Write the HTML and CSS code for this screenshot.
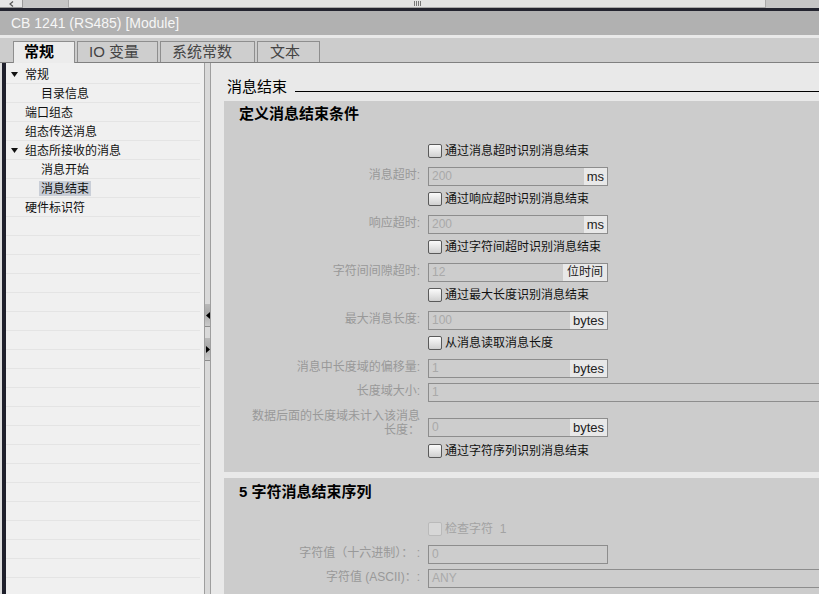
FILE: index.html
```html
<!DOCTYPE html>
<html lang="zh-CN">
<head>
    <meta charset="utf-8" />
    <title>CB 1241 (RS485) [Module]</title>
    <link rel="stylesheet" href="styles.css">
</head>
<body>
<div class="topstrip">
    <div class="sb-btn">
        <svg width="5" height="6" viewBox="0 0 5 6"><path d="M4 0.5 L1 3 L4 5.5" fill="none" stroke="#555" stroke-width="1.2"/></svg>
    </div>
    <div class="sb-track">
        <div class="sb-thumb"><span class="grip"></span></div>
    </div>
</div>
<div class="darkline"></div>
<div class="titlebar">CB 1241 (RS485) [Module]</div>
<div class="titlesep"></div>
<div class="tabbar">
    <div class="tab tab-general active">常规</div>
    <div class="tab tab-io">IO 变量</div>
    <div class="tab tab-const">系统常数</div>
    <div class="tab tab-text">文本</div>
</div>
<div class="main">
    <div class="edge"></div>
    <div class="tree">
        <div class="tree-list">
            <div class="node"><span class="caret"><svg width="7" height="5" viewBox="0 0 7 5"><polygon points="0,0 7,0 3.5,5" fill="#111"/></svg></span>常规</div>
            <div class="node sub">目录信息</div>
            <div class="node">端口组态</div>
            <div class="node">组态传送消息</div>
            <div class="node"><span class="caret"><svg width="7" height="5" viewBox="0 0 7 5"><polygon points="0,0 7,0 3.5,5" fill="#111"/></svg></span>组态所接收的消息</div>
            <div class="node sub">消息开始</div>
            <div class="node sub"><span class="sel">消息结束</span></div>
            <div class="node">硬件标识符</div>
        </div>
    </div>
    <div class="splitter">
        <div class="split-btn">
            <svg width="4" height="7" viewBox="0 0 4 7"><polygon points="4,0 4,7 0,3.5" fill="#000"/></svg>
        </div>
        <div class="split-btn">
            <svg width="4" height="7" viewBox="0 0 4 7"><polygon points="0,0 0,7 4,3.5" fill="#000"/></svg>
        </div>
    </div>
    <div class="editor">
        <div class="ed-head">
            <span class="ed-title">消息结束</span>
            <span class="rule"></span>
        </div>

        <div class="section">
            <h2>定义消息结束条件</h2>
            <div class="row">
                <span class="label"></span>
                <span class="check"><span class="box"></span>通过消息超时识别消息结束</span>
            </div>
            <div class="row">
                <span class="label">消息超时:</span>
                <div class="input"><span class="val">200</span><span class="unit">ms</span></div>
            </div>
            <div class="row">
                <span class="label"></span>
                <span class="check"><span class="box"></span>通过响应超时识别消息结束</span>
            </div>
            <div class="row">
                <span class="label">响应超时:</span>
                <div class="input"><span class="val">200</span><span class="unit">ms</span></div>
            </div>
            <div class="row">
                <span class="label"></span>
                <span class="check"><span class="box"></span>通过字符间超时识别消息结束</span>
            </div>
            <div class="row">
                <span class="label">字符间间隙超时:</span>
                <div class="input"><span class="val">12</span><span class="unit cjk">位时间</span></div>
            </div>
            <div class="row">
                <span class="label"></span>
                <span class="check"><span class="box"></span>通过最大长度识别消息结束</span>
            </div>
            <div class="row">
                <span class="label">最大消息长度:</span>
                <div class="input"><span class="val">100</span><span class="unit">bytes</span></div>
            </div>
            <div class="row">
                <span class="label"></span>
                <span class="check"><span class="box"></span>从消息读取消息长度</span>
            </div>
            <div class="row">
                <span class="label">消息中长度域的偏移量:</span>
                <div class="input"><span class="val">1</span><span class="unit">bytes</span></div>
            </div>
            <div class="row">
                <span class="label">长度域大小:</span>
                <div class="input wide"><span class="val">1</span></div>
            </div>
            <div class="row tall">
                <span class="label">数据后面的长度域未计入该消息<br>长度：</span>
                <div class="input"><span class="val">0</span><span class="unit">bytes</span></div>
            </div>
            <div class="row">
                <span class="label"></span>
                <span class="check"><span class="box"></span>通过字符序列识别消息结束</span>
            </div>
        </div>

        <div class="section seq">
            <h2>5 字符消息结束序列</h2>
            <div class="row">
                <span class="label"></span>
                <span class="check off"><span class="box"></span>检查字符&nbsp;&nbsp;1</span>
            </div>
            <div class="row">
                <span class="label">字符值（十六进制）： :</span>
                <div class="input"><span class="val">0</span></div>
            </div>
            <div class="row">
                <span class="label">字符值 (ASCII)：:</span>
                <div class="input wide"><span class="val">ANY</span></div>
            </div>
            <div class="row">
                <span class="label"></span>
                <span class="check off"><span class="box"></span></span>
            </div>
        </div>
    </div>
</div>
</body>
</html>
```

FILE: styles.css
```css
* {
    margin: 0;
    padding: 0;
    box-sizing: border-box;
}
body {
    width: 819px;
    height: 594px;
    overflow: hidden;
    background: #e9e9e9;
    font-family: "Liberation Sans", "Noto Sans CJK SC", sans-serif;
    font-size: 12px;
    color: #111;
}

/* top scroll strip */
.topstrip {
    height: 8px;
    display: flex;
    background: #c6c6c6;
}
.sb-btn {
    width: 23px;
    background: #e6e6e6;
    border-right: 1px solid #9a9a9a;
    border-bottom: 1px solid #9a9a9a;
    display: flex;
    align-items: center;
    justify-content: center;
}
.sb-track {
    flex: 1;
    display: flex;
    padding-left: 45px;
    padding-right: 53px;
}
.sb-thumb {
    flex: 1;
    background: #e3e3e3;
    border: 1px solid #a9a9a9;
    border-top: 0;
    display: flex;
    justify-content: center;
    align-items: flex-end;
    padding-bottom: 1px;
}
.grip {
    width: 7px;
    height: 5px;
    background: repeating-linear-gradient(to right, #777 0, #777 1px, transparent 1px, transparent 2px);
}
.darkline {
    height: 3px;
    background: #23242f;
}
.titlebar {
    height: 24px;
    line-height: 24px;
    background: #b1b1b1;
    color: #f6f6f6;
    font-size: 14px;
    padding-left: 11px;
}
.titlesep {
    height: 3px;
    background: #e9e9e9;
}

/* tabs */
.tabbar {
    height: 25px;
    background: #cccccc;
    border-bottom: 1px solid #808080;
    display: flex;
    align-items: flex-end;
    gap: 2px;
    padding-left: 13px;
}
.tab {
    height: 21px;
    border: 1px solid #8e8e8e;
    border-bottom: 0;
    background: #cecece;
    color: #444;
    font-size: 15px;
    line-height: 20px;
    padding-left: 11px;
    white-space: nowrap;
}
.tab.active {
    height: 22px;
    margin-bottom: -1px;
    background: #ececec;
    color: #000;
    font-weight: bold;
    padding-left: 10px;
}
.tab-general { width: 62px; }
.tab-io { width: 81px; }
.tab-const { width: 95px; }
.tab-text { width: 63px; padding-left: 12px; }

/* main area */
.main {
    display: flex;
    height: 531px;
}
.edge {
    width: 6px;
    flex-shrink: 0;
    background: #dedede;
    border-right: 4px solid #1f202c;
}
.tree {
    width: 198px;
    flex-shrink: 0;
    background: #f0f0f0;
    padding: 2px 4px 0 0;
}
.tree-list {
    height: 100%;
    background: repeating-linear-gradient(to bottom, transparent 0, transparent 18px, #e4e4e4 18px, #e4e4e4 19px);
}
.node {
    height: 19px;
    line-height: 20px;
    padding-left: 19px;
    white-space: nowrap;
}
.node.sub {
    padding-left: 35px;
}
.caret {
    display: inline-block;
    width: 14px;
    margin-left: -14px;
}
.caret svg {
    vertical-align: 2px;
}
.sel {
    background: #c9ced7;
    padding: 1px 2px 0;
    margin-left: -2px;
}

.splitter {
    width: 7px;
    flex-shrink: 0;
    background: #d9d9d9;
    border-left: 1px solid #9e9e9e;
    border-right: 1px solid #9e9e9e;
    padding-top: 241px;
    display: flex;
    flex-direction: column;
    gap: 11px;
}
.split-btn {
    height: 23px;
    background: linear-gradient(to bottom, #b9b9b9, #a9a9a9 40%, #cacaca);
    border-bottom: 1px solid #8c8c8c;
    display: flex;
    align-items: center;
    justify-content: center;
}

/* editor */
.editor {
    flex: 1;
    overflow: hidden;
    background: #e9e9e9;
}
.ed-head {
    height: 38px;
    display: flex;
    padding: 14px 0 0 16px;
}
.ed-title {
    font-size: 15px;
    line-height: 20px;
    color: #000;
}
.rule {
    flex: 1;
    height: 1px;
    background: #000;
    margin: 14px 0 0 8px;
}
.section {
    margin-left: 13px;
    background: #cccccc;
    padding-bottom: 9px;
}
.section + .section {
    margin-top: 6px;
}
.section h2 {
    font-size: 15px;
    line-height: 20px;
    font-weight: bold;
    color: #000;
    padding: 3px 0 0 15px;
    margin-bottom: 15px;
}
.section.seq h2 {
    padding-top: 4px;
    margin-bottom: 15px;
}
.row {
    display: flex;
    align-items: center;
    height: 24px;
}
.row.tall {
    height: 36px;
    align-items: flex-end;
    padding-bottom: 2px;
}
.label {
    width: 196px;
    flex-shrink: 0;
    margin-right: 8px;
    text-align: right;
    color: #999;
    line-height: 14px;
    white-space: nowrap;
}
.check {
    display: flex;
    align-items: center;
    color: #111;
    line-height: 16px;
    white-space: nowrap;
}
.box {
    width: 14px;
    height: 14px;
    margin-right: 3px;
    border: 1px solid #5a5a5a;
    border-radius: 2px;
    background: linear-gradient(to bottom, #fbfbfb, #d0d0d0);
}
.check.off {
    color: #a3a3a3;
}
.check.off .box {
    border-color: #bababa;
    background: #d7d7d7;
}
.input {
    width: 180px;
    height: 19px;
    flex-shrink: 0;
    margin-top: 2px;
    display: flex;
    border: 1px solid #8d8d8d;
    background: #cdcdcd;
}
.input.wide {
    width: 420px;
    border-right: 0;
}
.val {
    flex: 1;
    padding-left: 3px;
    color: #a9a9a9;
    line-height: 17px;
}
.unit {
    background: #e8e8e8;
    color: #222;
    font-size: 13px;
    line-height: 17px;
    padding: 0 3px;
}
.unit.cjk {
    font-size: 12px;
    padding: 0 4px;
}
```
